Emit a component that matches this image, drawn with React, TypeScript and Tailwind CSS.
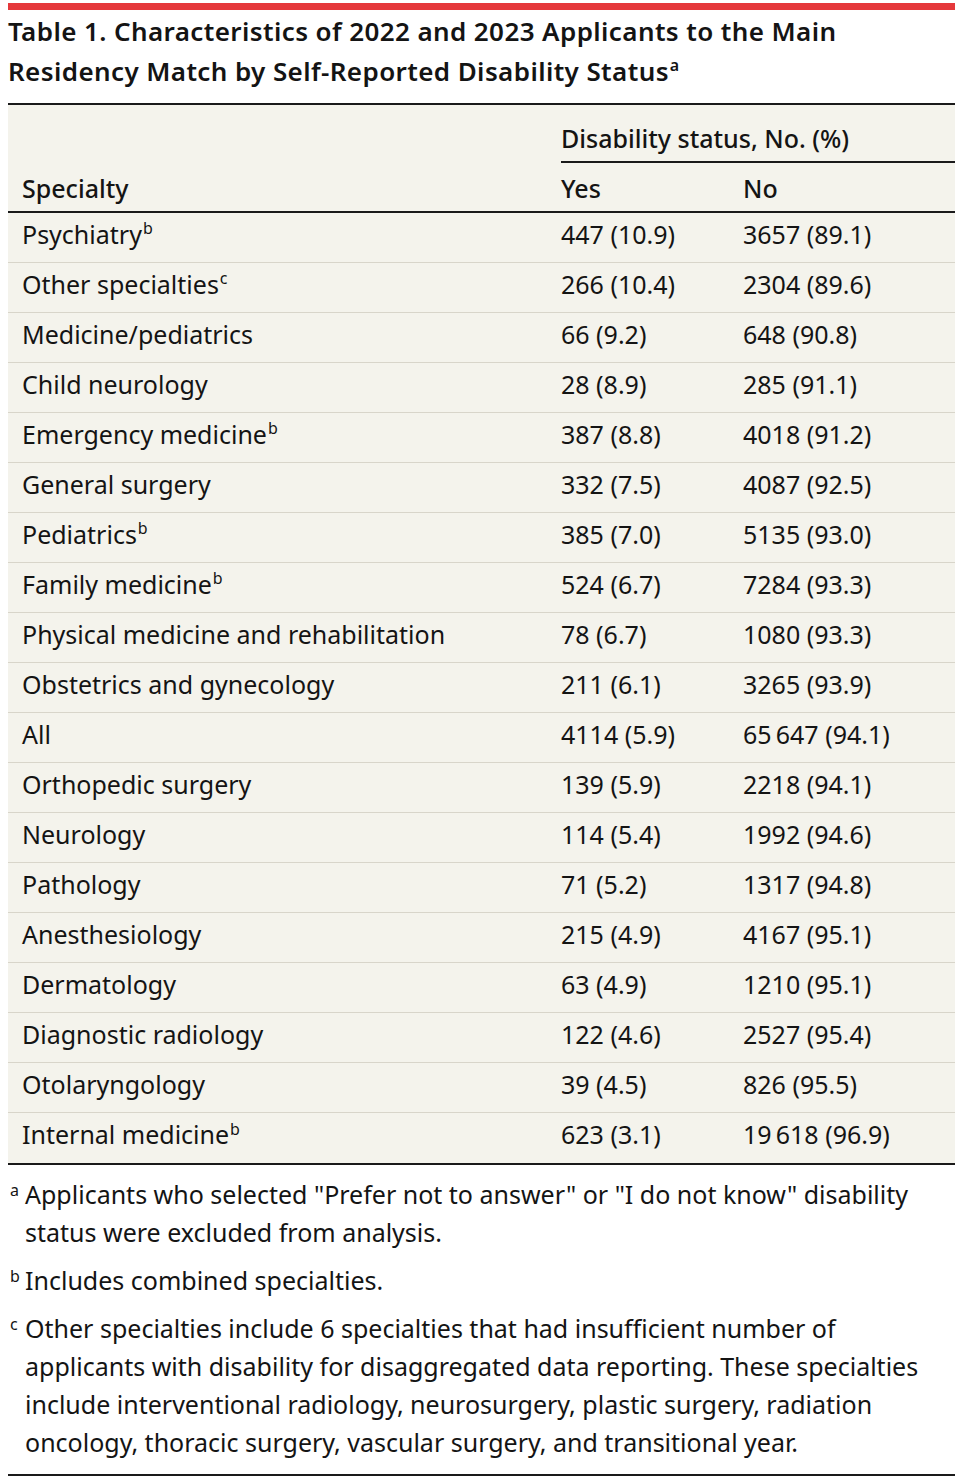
const rows: [string, string | null, string, string][] = [
  ["Psychiatry", "b", "447 (10.9)", "3657 (89.1)"],
  ["Other specialties", "c", "266 (10.4)", "2304 (89.6)"],
  ["Medicine/pediatrics", null, "66 (9.2)", "648 (90.8)"],
  ["Child neurology", null, "28 (8.9)", "285 (91.1)"],
  ["Emergency medicine", "b", "387 (8.8)", "4018 (91.2)"],
  ["General surgery", null, "332 (7.5)", "4087 (92.5)"],
  ["Pediatrics", "b", "385 (7.0)", "5135 (93.0)"],
  ["Family medicine", "b", "524 (6.7)", "7284 (93.3)"],
  ["Physical medicine and rehabilitation", null, "78 (6.7)", "1080 (93.3)"],
  ["Obstetrics and gynecology", null, "211 (6.1)", "3265 (93.9)"],
  ["All", null, "4114 (5.9)", "65\u2009647 (94.1)"],
  ["Orthopedic surgery", null, "139 (5.9)", "2218 (94.1)"],
  ["Neurology", null, "114 (5.4)", "1992 (94.6)"],
  ["Pathology", null, "71 (5.2)", "1317 (94.8)"],
  ["Anesthesiology", null, "215 (4.9)", "4167 (95.1)"],
  ["Dermatology", null, "63 (4.9)", "1210 (95.1)"],
  ["Diagnostic radiology", null, "122 (4.6)", "2527 (95.4)"],
  ["Otolaryngology", null, "39 (4.5)", "826 (95.5)"],
  ["Internal medicine", "b", "623 (3.1)", "19\u2009618 (96.9)"],
];

const notes = [
  {
    mark: "a",
    text: 'Applicants who selected "Prefer not to answer" or "I do not know" disability status were excluded from analysis.',
  },
  { mark: "b", text: "Includes combined specialties." },
  {
    mark: "c",
    text: "Other specialties include 6 specialties that had insufficient number of applicants with disability for disaggregated data reporting. These specialties include interventional radiology, neurosurgery, plastic surgery, radiation oncology, thoracic surgery, vascular surgery, and transitional year.",
  },
];

function Sup({ children }: { children: string }) {
  return <sup className="text-[16px] leading-none top-[-0.6em] ml-[1px]">{children}</sup>;
}

export default function App() {
  return (
    <div
      className="min-h-screen bg-white px-2 pt-[3px] text-[#141414]"
      style={{ fontFamily: '"Noto Sans", "Open Sans", sans-serif' }}
    >
      {/* Red rule */}
      <div className="h-[7px] bg-[#e5383b]" />

      {/* Title */}
      <h1 className="mt-[1px] text-[26px] font-semibold leading-[40px] tracking-[0.4px]">
        Table 1. Characteristics of 2022 and 2023 Applicants to the Main
        <br />
        Residency Match by Self-Reported Disability Status
        <Sup>a</Sup>
      </h1>

      {/* Table */}
      <div className="mt-[12px] border-t-2 border-b-2 border-[#1a1a1a] bg-[#f4f3ec] text-[25px]">
        {/* Header */}
        <div className="grid grid-cols-[553px_1fr] font-medium">
          <div />
          <div className="flex h-[58px] items-end border-b-2 border-[#1a1a1a] pb-[4px]">
            Disability status, No. (%)
          </div>
        </div>
        <div className="grid h-[50px] grid-cols-[539px_182px_1fr] items-center border-b-2 border-[#1a1a1a] pl-[14px] pt-[4px] font-medium">
          <div>Specialty</div>
          <div>Yes</div>
          <div>No</div>
        </div>

        {/* Body */}
        {rows.map(([name, mark, yes, no], i) => (
          <div
            key={name}
            className={`grid h-[50px] grid-cols-[539px_182px_1fr] items-center pl-[14px] pb-[6px] ${
              i < rows.length - 1 ? "border-b border-[#d8d5ca]" : ""
            }`}
          >
            <div>
              {name}
              {mark && <Sup>{mark}</Sup>}
            </div>
            <div>{yes}</div>
            <div>{no}</div>
          </div>
        ))}
      </div>

      {/* Footnotes */}
      <div className="border-b-2 border-[#1a1a1a] pt-[10px] pb-[13px] text-[25px] leading-[38px]">
        {notes.map((n) => (
          <div key={n.mark} className="mb-[10px] flex last:mb-0">
            <span className="w-[17px] shrink-0 pl-[2px] text-[16px] leading-[30px]">{n.mark}</span>
            <p className="pr-[20px]">{n.text}</p>
          </div>
        ))}
      </div>
    </div>
  );
}
